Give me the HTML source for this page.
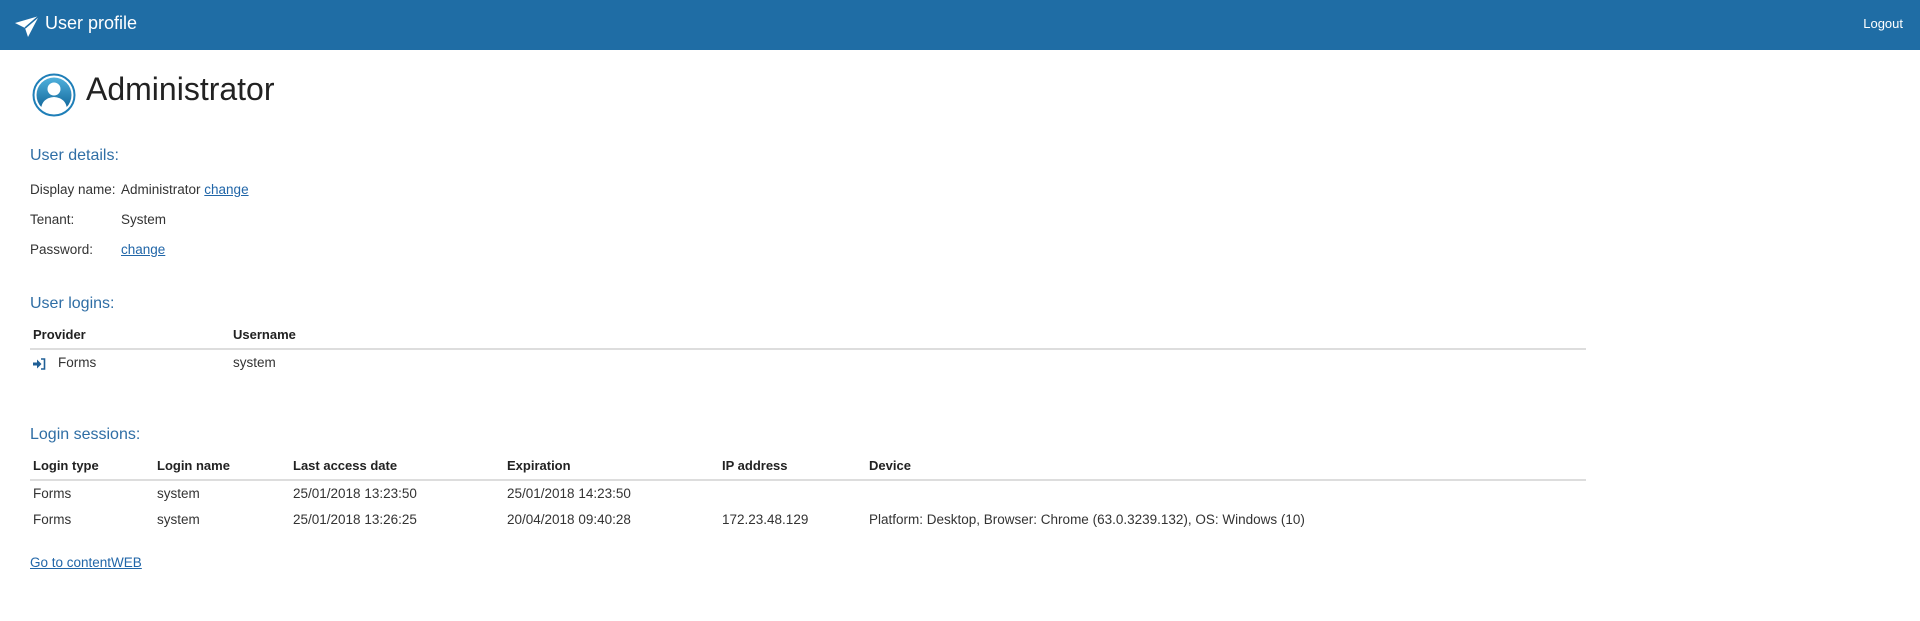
<!DOCTYPE html>
<html><head><meta charset="utf-8"><style>
*{margin:0;padding:0;box-sizing:border-box}
body{width:1920px;height:621px;background:#fff;font-family:"Liberation Sans",sans-serif;color:#333;position:relative;overflow:hidden}
.hdr{position:absolute;left:0;top:0;width:1920px;height:50px;background:#1f6da5}
.a{position:absolute;white-space:nowrap}
.h2{color:#2f6ea5;font-size:16px}
.t{font-size:13.5px;color:#333}
.b{font-size:13px;font-weight:bold;color:#222}
a{color:#2166a8;text-decoration:underline}
.line{position:absolute;left:30px;width:1556px;height:2px;background:#ddd}
</style></head><body>
<div class="hdr">
<svg class="a" style="left:14px;top:15px" width="26" height="23" viewBox="0 0 26 23"><path d="M1 8 L25 1 L14 22 L11 13 Z" fill="#fff"/><path d="M11 13 L25 1" stroke="#1f6da5" stroke-width="1.5"/></svg>
<div class="a" style="left:45px;top:13px;color:#fff;font-size:18px">User profile</div>
<div class="a" style="right:17px;top:16px;color:#fff;font-size:13px">Logout</div>
</div>
<svg class="a" style="left:32px;top:73px" width="44" height="44" viewBox="0 0 44 44"><defs><linearGradient id="g" x1="0" y1="0" x2="0" y2="1"><stop offset="0" stop-color="#4fb0dc"/><stop offset="1" stop-color="#0b5e93"/></linearGradient></defs><circle cx="22" cy="22" r="20.5" fill="#fff" stroke="#1f7fb8" stroke-width="2"/><circle cx="22" cy="22" r="17.5" fill="url(#g)"/><circle cx="22" cy="16" r="6.5" fill="#fff"/><path d="M9 36 Q10 25 22 24 Q34 25 35 36 Q29 40 22 40 Q15 40 9 36Z" fill="#fff"/></svg>
<div class="a" style="left:86px;top:71px;font-size:32px;color:#222">Administrator</div>
<div class="a h2" style="left:30px;top:147px">User details:</div>
<div class="a t" style="left:30px;top:182px">Display name:</div>
<div class="a t" style="left:121px;top:182px">Administrator <a>change</a></div>
<div class="a t" style="left:30px;top:212px">Tenant:</div>
<div class="a t" style="left:121px;top:212px">System</div>
<div class="a t" style="left:30px;top:242px">Password:</div>
<div class="a t" style="left:121px;top:242px"><a>change</a></div>
<div class="a h2" style="left:30px;top:295px">User logins:</div>
<div class="a b" style="left:33px;top:327px">Provider</div>
<div class="a b" style="left:233px;top:327px">Username</div>
<div class="line" style="top:348px"></div>
<svg class="a" style="left:33px;top:358px" width="13" height="12" viewBox="0 0 13 12"><path d="M0 4.5h4V1.5l4.5 4.5L4 10.5V7.5H0z" fill="#1f5f96"/><path d="M8 1h3.5v10H8" fill="none" stroke="#1f5f96" stroke-width="1.6"/></svg>
<div class="a t" style="left:58px;top:355px">Forms</div>
<div class="a t" style="left:233px;top:355px">system</div>
<div class="a h2" style="left:30px;top:426px">Login sessions:</div>
<div class="a b" style="left:33px;top:458px">Login type</div>
<div class="a b" style="left:157px;top:458px">Login name</div>
<div class="a b" style="left:293px;top:458px">Last access date</div>
<div class="a b" style="left:507px;top:458px">Expiration</div>
<div class="a b" style="left:722px;top:458px">IP address</div>
<div class="a b" style="left:869px;top:458px">Device</div>
<div class="line" style="top:479px"></div>
<div class="a t" style="left:33px;top:486px">Forms</div>
<div class="a t" style="left:157px;top:486px">system</div>
<div class="a t" style="left:293px;top:486px">25/01/2018 13:23:50</div>
<div class="a t" style="left:507px;top:486px">25/01/2018 14:23:50</div>
<div class="a t" style="left:33px;top:512px">Forms</div>
<div class="a t" style="left:157px;top:512px">system</div>
<div class="a t" style="left:293px;top:512px">25/01/2018 13:26:25</div>
<div class="a t" style="left:507px;top:512px">20/04/2018 09:40:28</div>
<div class="a t" style="left:722px;top:512px">172.23.48.129</div>
<div class="a t" style="left:869px;top:512px">Platform: Desktop, Browser: Chrome (63.0.3239.132), OS: Windows (10)</div>
<div class="a t" style="left:30px;top:555px"><a>Go to contentWEB</a></div>
</body></html>
